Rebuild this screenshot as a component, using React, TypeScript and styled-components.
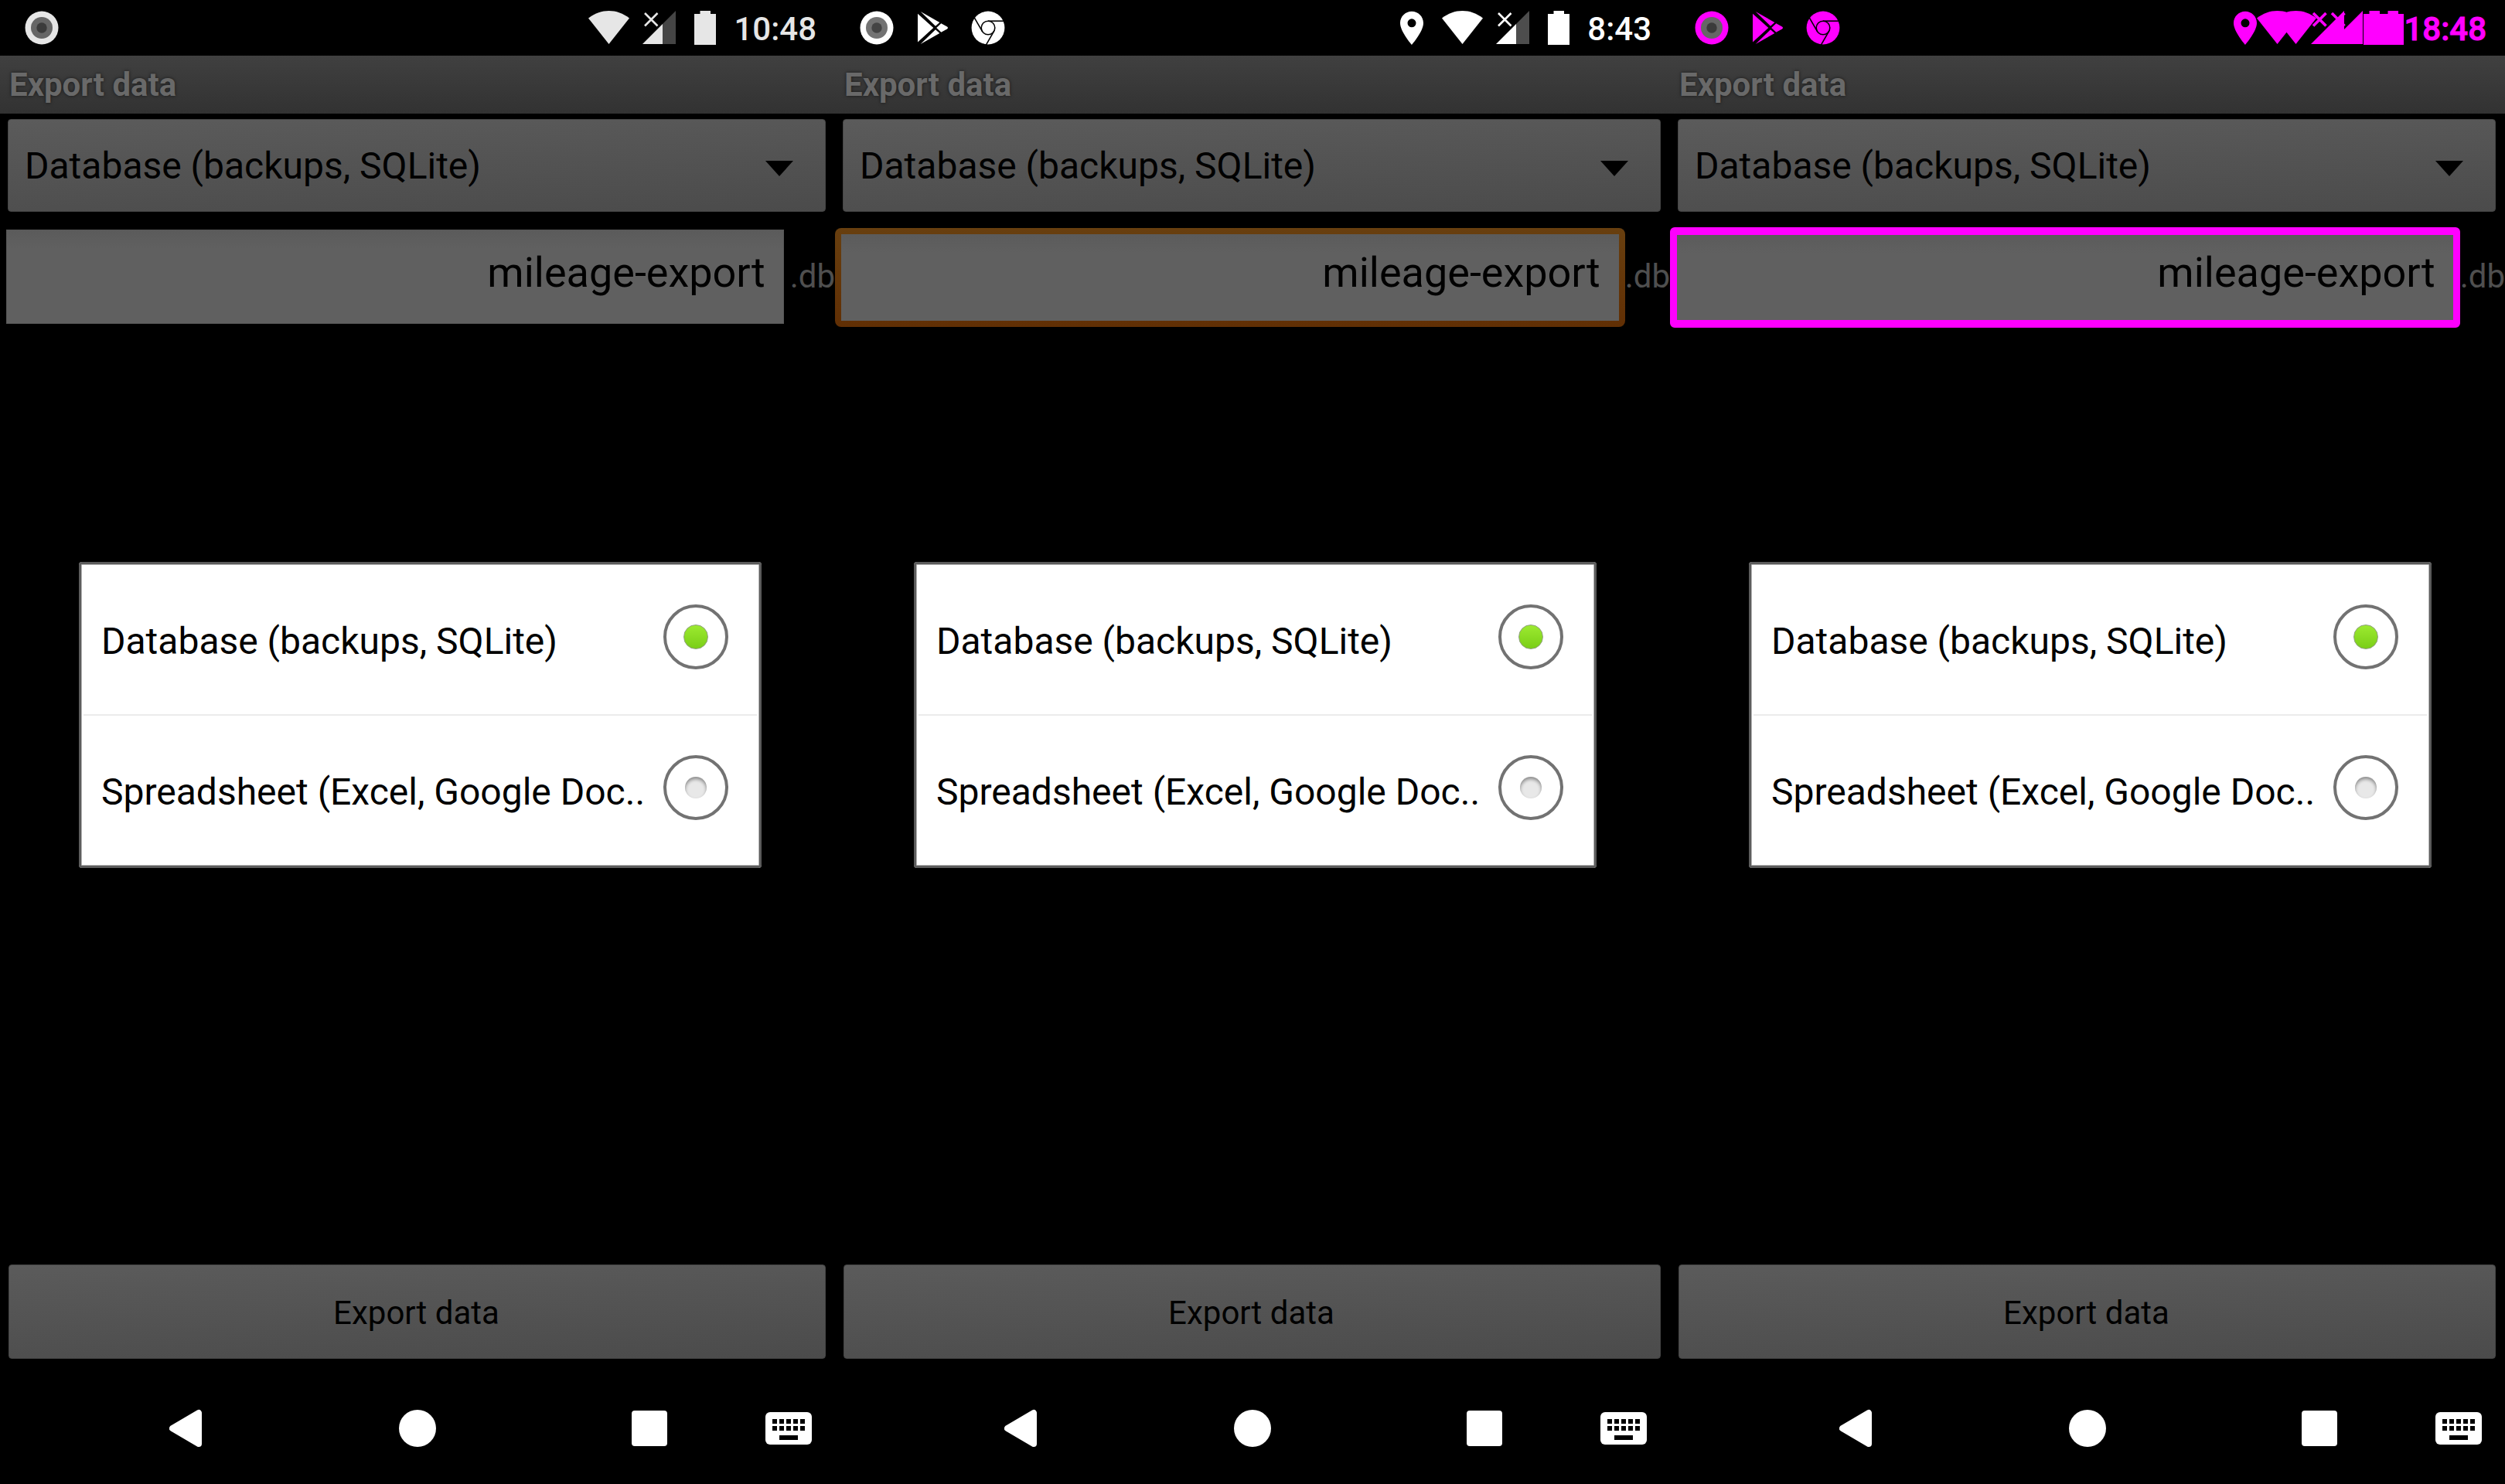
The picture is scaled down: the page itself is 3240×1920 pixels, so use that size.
import React from "react";
import styled, { createGlobalStyle, css } from "styled-components";

type Frame = "plain" | "focused" | "marked";

const GlobalStyle = createGlobalStyle`
  *, *::before, *::after { box-sizing: border-box; }
  html, body { margin: 0; background: #000; }
  body, button, input, select { font-family: Roboto, "Liberation Sans", sans-serif; }
`;

const Board = styled.main`
  display: grid;
  grid-template-columns: repeat(3, minmax(0, 1fr));
  min-height: 100vh;
  background: #000;
`;

const Phone = styled.section`
  position: relative;
  display: flex;
  flex-direction: column;
  min-width: 0;
`;

const StatusBar = styled.header<{ $tint: string }>`
  display: flex;
  justify-content: space-between;
  height: 72px;
  padding: 0 24px 0 18px;
  color: ${(p) => p.$tint};
`;

const Notifications = styled.div`
  display: grid;
  grid-auto-flow: column;
  grid-auto-columns: 72px;
  place-items: center;
`;

const SystemIcons = styled.div`
  display: flex;
  align-items: center;
  svg { display: block; }
`;

const IconRun = styled.div`
  display: flex;
  align-items: center;
  margin-right: 23px;
  svg + svg { margin-left: 24px; }
  svg + svg.signal { margin-left: 17px; }
`;

const Clock = styled.time<{ $heavy: boolean }>`
  padding-top: 3px;
  font-size: 42px;
  font-weight: 500;
  line-height: 48px;
  -webkit-text-stroke: ${(p) => (p.$heavy ? "1px currentColor" : "0")};
`;

const TitleBar = styled.h1`
  display: flex;
  align-items: center;
  height: 75px;
  margin: 0;
  padding: 0 12px;
  background: linear-gradient(#404040, #323232);
  color: #696969;
  font-size: 42px;
  font-weight: 700;
  line-height: 48px;
  text-shadow: 0 0 4px rgba(0, 0, 0, 0.6);
`;

const Form = styled.form`
  display: flex;
  flex: 1;
  flex-direction: column;
  padding: 7px 0 18px;
`;

const panel = css`
  border: 1px solid #454545;
  border-radius: 4px;
  background: linear-gradient(178deg, #5b5b5b, #4b4b4b);
  color: #000;
`;

const Spinner = styled.div`
  display: grid;
  grid-template-columns: minmax(0, 1fr) auto;
  align-items: center;
  margin: 0 12px 0 10px;
  svg {
    grid-area: 1 / 2;
    margin: 7px 42px 0 0;
    pointer-events: none;
  }
`;

const SpinnerSelect = styled.select`
  ${panel}
  grid-area: 1 / 1 / 2 / 3;
  height: 120px;
  padding: 0 100px 0 21px;
  appearance: none;
  font-size: 48px;
`;

const FileRow = styled.div`
  display: flex;
  align-items: center;
  margin-top: 20px;
`;

const Field = styled.div`
  display: grid;
  flex: 1;
  min-width: 0;
  height: 130px;
`;

const frames = {
  plain: css`
    margin: 3px 8px 5px 8px;
    border: 1px solid #565656;
    background: linear-gradient(#5b5b5b, #606060 24px);
  `,
  focused: css`
    margin: 1px 0;
    border: 8px solid transparent;
    border-radius: 8px;
    background:
      linear-gradient(#5b5b5b, #606060 24px) padding-box,
      linear-gradient(#683f0f, #612f04) border-box;
  `,
  marked: css`
    border: solid #f0f;
    border-width: 10px 9px;
    border-radius: 6px;
    background: linear-gradient(#5b5b5b, #606060 24px);
  `,
};

const FieldFrame = styled.span<{ $frame: Frame }>`
  grid-area: 1 / 1;
  ${(p) => frames[p.$frame]}
`;

const FieldInput = styled.input`
  grid-area: 1 / 1;
  width: 100%;
  min-width: 0;
  padding: 0 32px 14px 10px;
  border: 0;
  outline: 0;
  background: transparent;
  color: #000;
  font-size: 54px;
  text-align: right;
`;

const Suffix = styled.span`
  padding-bottom: 3px;
  color: #4f4f4f;
  font-size: 42px;
  line-height: 48px;
`;

const ExportButton = styled.button`
  ${panel}
  height: 122px;
  margin: auto 12px 0 11px;
  padding: 3px 2px 0 0;
  font-size: 42px;
`;

const DialogLayer = styled.div`
  position: absolute;
  inset: 72px 0 144px;
  display: flex;
  align-items: center;
  justify-content: center;
  padding: 2px 0 0 7px;
`;

const Dialog = styled.fieldset`
  width: calc(100% - 190px);
  min-width: 0;
  margin: 0;
  padding: 1px;
  border: 3px solid #5c5c5c;
  border-radius: 4px;
  background: #b4b4b4;
`;

const Option = styled.label`
  display: flex;
  align-items: center;
  justify-content: space-between;
  height: 193px;
  padding: 0 39px 0 25px;
  background: #fff;
  color: #000;
  font-size: 48px;
  line-height: 56px;
`;

const OptionText = styled.span`
  padding-top: 4px;
  white-space: nowrap;
`;

const Divider = styled.hr`
  height: 2px;
  margin: 0;
  border: solid #fff;
  border-width: 0 2px;
  background: #ebebeb;
`;

const Radio = styled.input`
  display: grid;
  flex: none;
  place-items: center;
  width: 84px;
  height: 84px;
  margin: 0 0 8px;
  border: 4px solid #727272;
  border-radius: 50%;
  appearance: none;
  &::before {
    content: "";
    width: 28px;
    height: 28px;
    border-radius: 50%;
    background: #e8e8e8;
    box-shadow: inset 0 3px 4px rgba(0, 0, 0, 0.4);
  }
  &:checked::before {
    width: 32px;
    height: 32px;
    border: 1px solid #8f9f80;
    background: linear-gradient(#9cea30, #7ace17);
    box-shadow: none;
  }
`;

const NavBar = styled.nav`
  display: grid;
  grid-template-columns: 3fr 10fr 10fr 10fr 3fr;
  height: 144px;
`;

const NavButton = styled.button<{ $edge?: boolean }>`
  display: flex;
  align-items: center;
  justify-content: ${(p) => (p.$edge ? "flex-start" : "center")};
  padding: 0;
  border: 0;
  background: transparent;
  color: #fff;
  &:first-child { grid-column: 2; }
`;

function TargetIcon({ middle, core }: { middle: string; core: string }) {
  return (
    <svg width="44" height="44" viewBox="0 0 44 44" aria-hidden="true">
      <circle cx="22" cy="22" r="21.5" fill="currentColor" />
      <circle cx="22" cy="22" r="14" fill={middle} />
      <circle cx="22" cy="22" r="6.7" fill={core} />
    </svg>
  );
}

function PlayIcon() {
  return (
    <svg width="40" height="42" viewBox="-1 0 40 42" fill="currentColor" aria-hidden="true">
      <path d="M0 2.7 20.3 21 0 39.5z" />
      <path d="M3.7 0 28.3 14 23 18.7z" />
      <path d="M3.7 42 28.3 28 23 23.3z" />
      <path d="M30.3 15.3 38 19.5Q40 21 38 22.5L30.3 26.8 24.2 21z" />
    </svg>
  );
}

function ChromeIcon() {
  return (
    <svg width="44" height="44" viewBox="-22 -22 44 44" aria-hidden="true">
      <circle r="21.4" fill="currentColor" />
      <g fill="none" stroke="#000" strokeWidth="1.6">
        <circle r="8.8" />
        <path d="M0-8.8H22" />
        <path d="M0-8.8H22" transform="rotate(120)" />
        <path d="M0-8.8H22" transform="rotate(240)" />
      </g>
    </svg>
  );
}

const PinShape = () => (
  <path
    fillRule="evenodd"
    d="M15 .8C6.7 .8 0 7.5 0 15.8 0 27 15 44 15 44S30 27 30 15.8C30 7.5 23.3 .8 15 .8zM15 10.3a5.500 5.500 0 1 1 0 11 5.500 5.500 0 0 1 0-11z"
  />
);
const WifiShape = () => <path d="M0 9.6C8 3.2 17 0 26.5 0S45 3.2 53 9.6L26.5 43z" />;
const SignalShape = ({ merged }: { merged?: boolean }) => (
  <>
    <path d="M0 43 26 17V43z" />
    <path d="M26 17 43 0V43H26z" opacity={merged ? 1 : 0.3} />
    <path d="M3 3 19.5 19.5M19.5 3 3 19.5" stroke="currentColor" strokeWidth={merged ? 3.6 : 2.6} />
  </>
);
const BatteryShape = () => <path d="M0 4H7.5V0H21V4H28V44H0z" />;

function SystemIcon({ width, className, children }: { width: number; className?: string; children: React.ReactNode }) {
  return (
    <svg className={className} width={width} height="44" viewBox={`0 0 ${width} 44`} fill="currentColor" aria-hidden="true">
      {children}
    </svg>
  );
}

function IconSet({ pin }: { pin?: boolean }) {
  return (
    <IconRun>
      {pin && <SystemIcon width={30}><PinShape /></SystemIcon>}
      <SystemIcon width={53}><WifiShape /></SystemIcon>
      <SystemIcon width={43} className="signal"><SignalShape /></SystemIcon>
      <SystemIcon width={28}><BatteryShape /></SystemIcon>
    </IconRun>
  );
}

/* Both status bars laid over one another in a single colour; it ends flush with the clock. */
function MergedIcons() {
  return (
    <SystemIcon width={220}>
      <PinShape />
      {[30, 54].map((x) => (
        <g key={x} transform={`translate(${x} 0)`}>
          <WifiShape />
          <g transform="translate(70 0)"><SignalShape merged /></g>
          <g transform="translate(138 0)"><BatteryShape /></g>
        </g>
      ))}
    </SystemIcon>
  );
}

function KeyboardIcon() {
  return (
    <svg width="60" height="42" viewBox="0 0 60 42" aria-hidden="true">
      <rect width="60" height="42" rx="6" fill="currentColor" />
      {[9, 18].map((y) =>
        [9, 18, 27, 36, 45].map((x) => <rect key={`${x}-${y}`} x={x} y={y} width="6" height="6" />)
      )}
      <rect x="18" y="30" width="24" height="6" />
    </svg>
  );
}

interface ScreenProps {
  id: string;
  tint: string;
  ring: [string, string];
  apps: boolean;
  icons: React.ReactNode;
  time: string;
  frame: Frame;
}

function Screen({ id, tint, ring, apps, icons, time, frame }: ScreenProps) {
  return (
    <Phone>
      <StatusBar $tint={tint}>
        <Notifications>
          <TargetIcon middle={ring[0]} core={ring[1]} />
          {apps && <PlayIcon />}
          {apps && <ChromeIcon />}
        </Notifications>
        <SystemIcons>
          {icons}
          <Clock $heavy={frame === "marked"}>{time}</Clock>
        </SystemIcons>
      </StatusBar>
      <TitleBar>Export data</TitleBar>
      <Form onSubmit={(e) => e.preventDefault()}>
        <Spinner>
          <SpinnerSelect aria-label="Export format" defaultValue="db">
            <option value="db">Database (backups, SQLite)</option>
          </SpinnerSelect>
          <svg width="36" height="20" viewBox="0 0 36 20" aria-hidden="true">
            <path d="M0 0H36L18 20z" />
          </svg>
        </Spinner>
        <FileRow>
          <Field>
            <FieldFrame $frame={frame} />
            <FieldInput id={`${id}-file`} aria-label="File name" defaultValue="mileage-export" />
          </Field>
          <Suffix>.db</Suffix>
        </FileRow>
        <ExportButton type="submit">Export data</ExportButton>
      </Form>
      <DialogLayer>
        <Dialog aria-label="Export format">
          <Option>
            <OptionText>Database (backups, SQLite)</OptionText>
            <Radio type="radio" name={`${id}-format`} defaultChecked />
          </Option>
          <Divider />
          <Option>
            <OptionText>Spreadsheet (Excel, Google Doc..</OptionText>
            <Radio type="radio" name={`${id}-format`} />
          </Option>
        </Dialog>
      </DialogLayer>
      <NavBar>
        <NavButton aria-label="Back">
          <svg width="42" height="50" viewBox="0 0 42 50" aria-hidden="true">
            <path d="M4 25 38 5V45z" fill="currentColor" stroke="currentColor" strokeWidth="8" strokeLinejoin="round" />
          </svg>
        </NavButton>
        <NavButton aria-label="Home">
          <svg width="48" height="48" viewBox="0 0 48 48" aria-hidden="true">
            <circle cx="24" cy="24" r="24" fill="currentColor" />
          </svg>
        </NavButton>
        <NavButton aria-label="Recent apps">
          <svg width="46" height="46" viewBox="0 0 46 46" aria-hidden="true">
            <rect width="46" height="46" rx="4" fill="currentColor" />
          </svg>
        </NavButton>
        <NavButton aria-label="Switch keyboard" $edge>
          <KeyboardIcon />
        </NavButton>
      </NavBar>
    </Phone>
  );
}

export default function App() {
  return (
    <>
      <GlobalStyle />
      <Board>
        <Screen id="first" tint="#e6e6e6" ring={["#666", "#3b3b3b"]} apps={false} icons={<IconSet />} time="10:48" frame="plain" />
        <Screen id="second" tint="#fff" ring={["#737373", "#444"]} apps icons={<IconSet pin />} time="8:43" frame="focused" />
        <Screen id="third" tint="#f0f" ring={["#666", "#3b3b3b"]} apps icons={<MergedIcons />} time="18:48" frame="marked" />
      </Board>
    </>
  );
}
